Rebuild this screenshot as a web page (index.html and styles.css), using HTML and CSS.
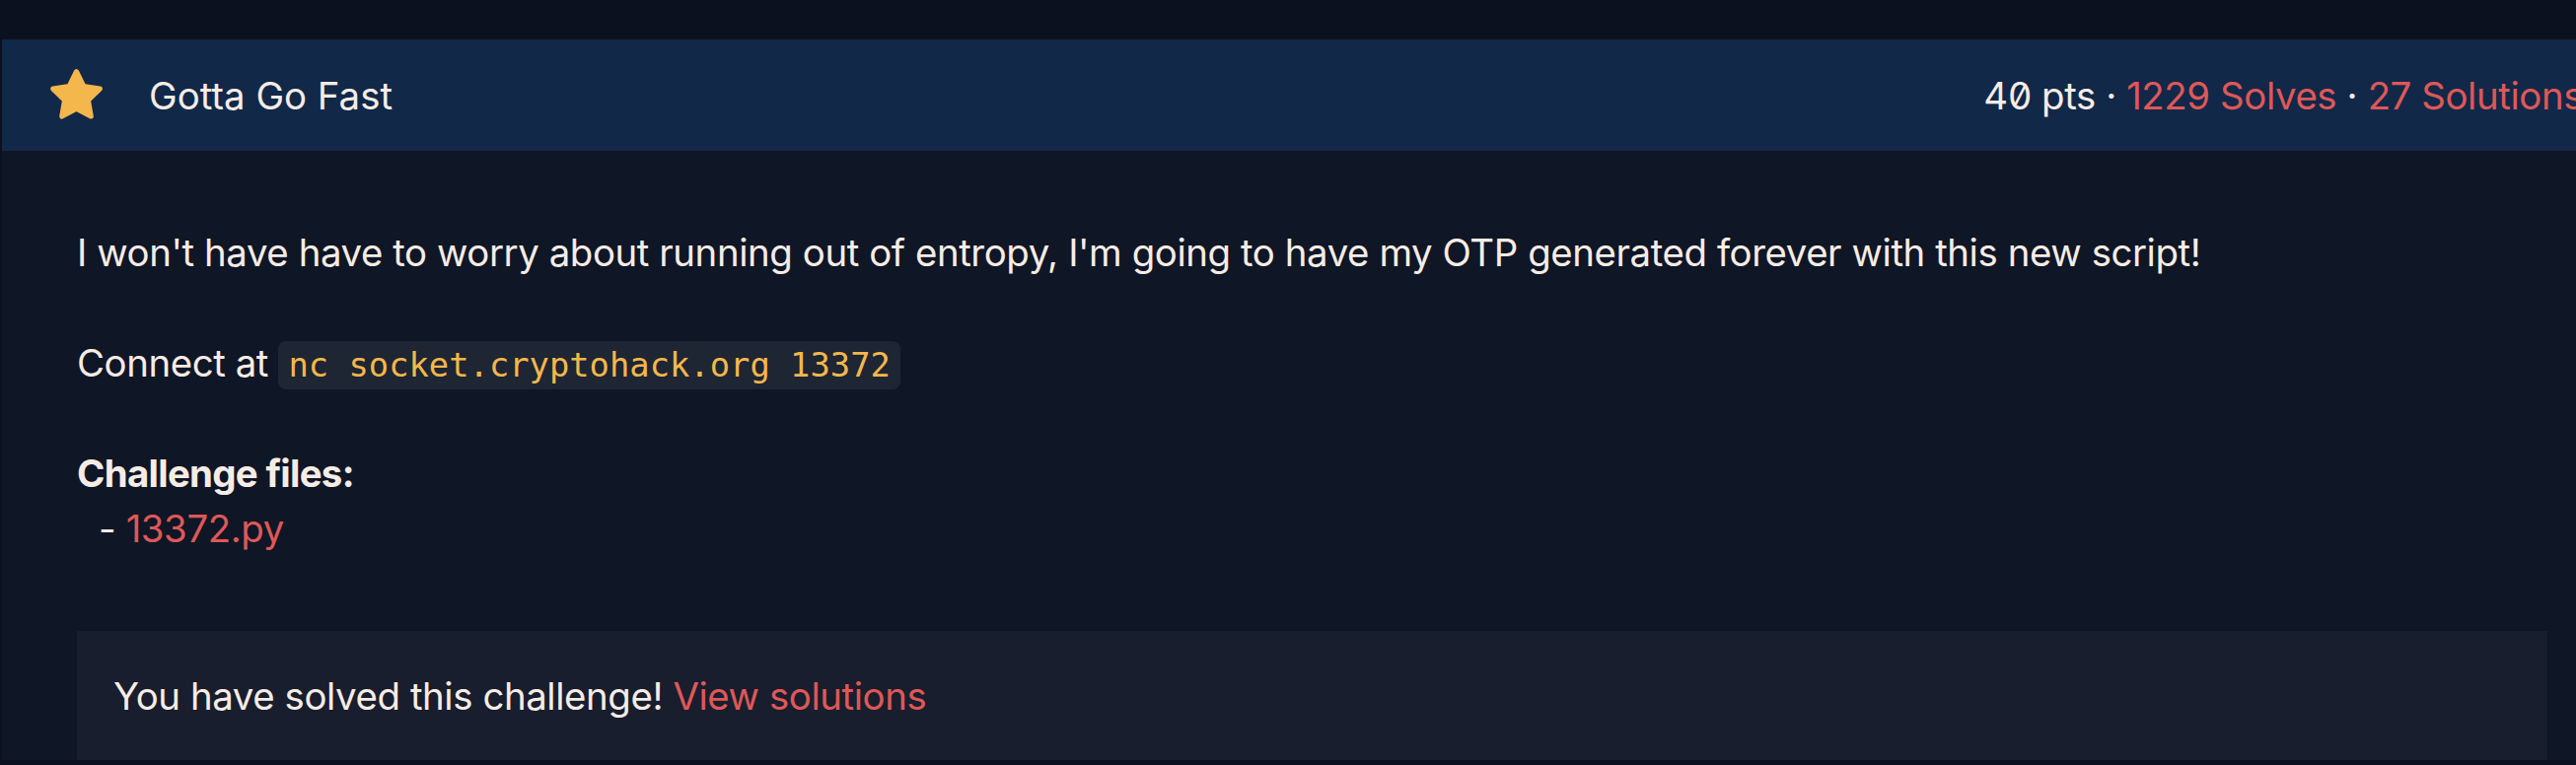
FILE: index.html
```html
<!DOCTYPE html>
<html lang="en">
<head>
<meta charset="utf-8">
<title>Gotta Go Fast</title>
<link rel="stylesheet" href="styles.css">
</head>
<body>
<div class="card">
  <div class="card-header">
    <svg class="star" viewBox="0 0 24 24" aria-hidden="true">
      <polygon points="12 2 15.09 8.26 22 9.27 17 14.14 18.18 21.02 12 17.77 5.82 21.02 7 14.14 2 9.27 8.91 8.26"></polygon>
    </svg>
    <span class="title">Gotta Go Fast</span>
    <span class="meta"><span class="pts">40 pts</span> · <a class="link" href="#">1229 Solves</a> · <a class="link" href="#">27 Solutions</a></span>
  </div>
  <div class="card-body">
    <p class="para">I won't have have to worry about running out of entropy, I'm going to have my OTP generated forever with this new script!</p>
    <p class="para">Connect at <code class="code">nc socket.cryptohack.org 13372</code></p>
    <div class="files">
      <div class="files-title">Challenge files:</div>
      <div class="files-item">- <a class="link" href="#">13372.py</a></div>
    </div>
    <div class="solved">You have solved this challenge! <a class="link" href="#">View solutions</a></div>
  </div>
</div>
</body>
</html>
```

FILE: styles.css
```css
html, body {
  margin: 0;
  padding: 0;
}
body {
  background: #0b111e;
  overflow: hidden;
  font-family: Inter, "Noto Sans", sans-serif;
  font-size: 38.4px;
  line-height: 56px;
  letter-spacing: -0.42px;
  color: #f7ece5;
  font-feature-settings: "zero" 1;
}
.card {
  margin: 40px 0 0 2px;
  width: 2657px;
  height: 731px;
  background: #0f1626;
  overflow: hidden;
}
.card-header {
  height: 113px;
  background: #112849;
  display: flex;
  align-items: center;
  padding: 0 40px 0 47px;
}
.star {
  width: 57px;
  height: 57px;
  flex: none;
}
.star polygon {
  fill: #f4b74c;
  stroke: #f4b74c;
  stroke-width: 2.2;
  stroke-linejoin: round;
}
.title {
  margin-left: 45px;
  letter-spacing: 0;
}
.meta {
  margin-left: auto;
  white-space: nowrap;
}
.pts {
  font-feature-settings: "zero" 1, "tnum" 1;
}
.link {
  color: #de5858;
  text-decoration: none;
}
.card-body {
  padding: 75px 76px 0 76px;
}
.para {
  margin: 0 0 56px 0;
}
.code {
  font-family: "DejaVu Sans Mono", monospace;
  font-size: 33.8px;
  line-height: 40px;
  letter-spacing: 0;
  color: #f5b74c;
  background: #1e2533;
  padding: 5px 10px;
  border-radius: 8px;
}
.files {
  margin-bottom: 76px;
}
.files-title {
  font-weight: 700;
  letter-spacing: -0.7px;
}
.files-item {
  padding-left: 22px;
}
.solved {
  background: #181e2d;
  padding: 37.5px 37px;
}
```
